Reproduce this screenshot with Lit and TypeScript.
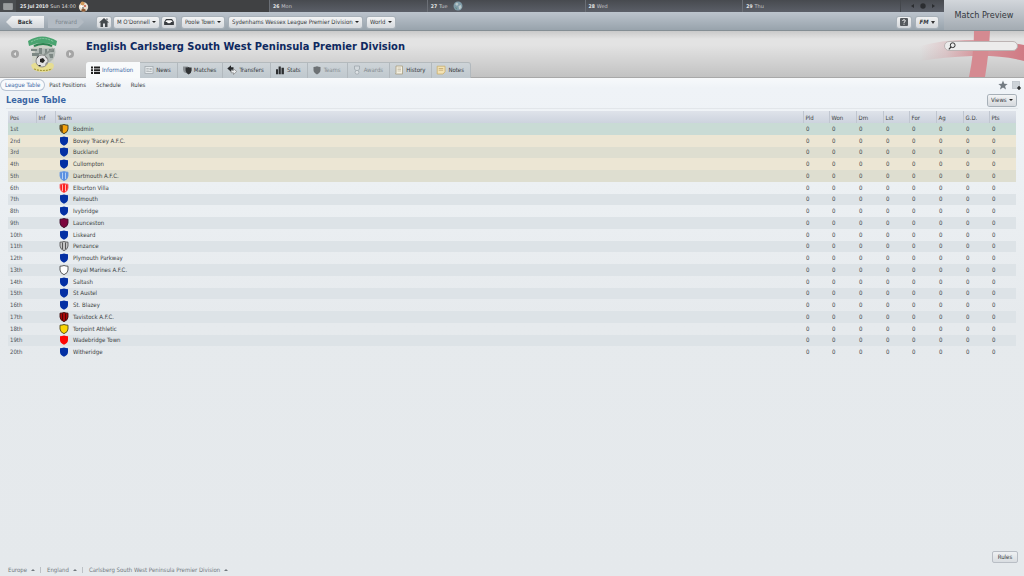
import { LitElement, html, css, svg, nothing } from "lit";
import { customElement, property } from "lit/decorators.js";

type Kit = { fill: string; edge?: string; stripe?: string; half?: string };

const BLUE: Kit = { fill: "#0430a4" };

const TEAMS: { name: string; kit: Kit }[] = [
  { name: "Bodmin", kit: { fill: "#f5a20c", edge: "#3a3422", half: "#6b4a10" } },
  { name: "Bovey Tracey A.F.C.", kit: BLUE },
  { name: "Buckland", kit: BLUE },
  { name: "Cullompton", kit: BLUE },
  { name: "Dartmouth A.F.C.", kit: { fill: "#5a90e2", edge: "#6c9ae0", stripe: "#b4cff4" } },
  { name: "Elburton Villa", kit: { fill: "#fb2020", edge: "#fb6a6a", stripe: "#ffb4b4" } },
  { name: "Falmouth", kit: BLUE },
  { name: "Ivybridge", kit: BLUE },
  { name: "Launceston", kit: { fill: "#7c063e", edge: "#3c1028" } },
  { name: "Liskeard", kit: BLUE },
  { name: "Penzance", kit: { fill: "#c4c4c4", edge: "#5c5c5c", stripe: "#555" } },
  { name: "Plymouth Parkway", kit: BLUE },
  { name: "Royal Marines A.F.C.", kit: { fill: "#fdfdfd", edge: "#4a4a4a" } },
  { name: "Saltash", kit: BLUE },
  { name: "St Austel", kit: BLUE },
  { name: "St. Blazey", kit: BLUE },
  { name: "Tavistock A.F.C.", kit: { fill: "#a80808", edge: "#3a0c0c", stripe: "#500606" } },
  { name: "Torpoint Athletic", kit: { fill: "#fbd503", edge: "#50481c" } },
  { name: "Wadebridge Town", kit: { fill: "#fe0606" } },
  { name: "Witheridge", kit: BLUE },
];

const STATS = ["Pld", "Won", "Drn", "Lst", "For", "Ag", "G.D.", "Pts"];

const ordinal = (n: number) =>
  n + (n > 3 ? "th" : n === 3 ? "rd" : n === 2 ? "nd" : "st");

const SHIELD = "M1 1.2 Q3 1.2 5 .5 Q7 1.2 9 1.2 V5 Q9 8 5 9.7 Q1 8 1 5Z";

const ICONS: Record<string, unknown> = {
  Information: svg`<path fill="#222" d="M1 1.5h2v2H1zM4 1.5h6v2H4zM1 4.2h2v2H1zM4 4.2h6v2H4zM1 7h2v2H1zM4 7h6v2H4z"/>`,
  News: svg`<rect x="1" y="1.5" width="8" height="7" fill="#e6eaec" stroke="#a4abb0" stroke-width=".8"/><path stroke="#a0a6aa" stroke-width=".7" d="M2.3 3.5h2.5M2.3 5h2.5M2.3 6.5h5.4"/><rect x="5.5" y="3" width="2.2" height="2.2" fill="#b4babe"/>`,
  Matches: svg`<path fill="#8b9094" d="M1 1.5h5v3Q6 7 3.5 8Q1 7 1 4.500Z"/><path fill="#303234" d="M3.600 2.500Q5.500 2.600 6.600 2Q7.700 2.600 9.600 2.500V5.500Q9.500 8 6.600 9.500Q3.700 8 3.600 5.500Z"/>`,
  Transfers: svg`<path fill="#26282a" d="M.3 3.500 4 .3V2.200H6.500V4.800H4V6.700Z"/><path fill="#eceeef" stroke="#777" stroke-width=".6" d="M9.700 6.500 6.500 9.500V7.800H4.200V5.500H6.500V3.700Z"/>`,
  Stats: svg`<path fill="#2c2e30" d="M1 4.200h2v5H1zM3.600 1.500h2.200v7.700H3.600zM6.500 2.800h2.400v6.400H6.500z"/>`,
  Teams: svg`<path fill="#6d7174" d="M1.500 2Q3.500 2 5 1.200Q6.500 2 8.500 2V5.200Q8.400 7.800 5 9.400Q1.600 7.800 1.500 5.200Z"/>`,
  Awards: svg`<path fill="#d2d8dc" stroke="#9aa2a8" stroke-width=".7" d="M2.500 1h5v3.300L5 6 2.500 4.300Z"/><circle cx="5" cy="7.300" r="1.900" fill="#dfe3e6" stroke="#9aa2a8" stroke-width=".7"/>`,
  History: svg`<path fill="#f5f1e2" stroke="#a79d80" stroke-width=".8" d="M2 1H8.500V9H1.500Q2.300 7.800 2 6Z"/><path stroke="#b2aa92" stroke-width=".6" d="M3.500 3h3.500M3.500 4.500h3.500M3.500 6h3.500"/>`,
  Notes: svg`<path fill="#f3e2b4" stroke="#c9ae6d" stroke-width=".8" d="M1.200 1.200H9V6.800L7 9H1.200Z"/><path stroke="#b99f66" stroke-width=".7" d="M2.700 3.500h4.500M2.700 5.200h4.500"/>`,
};

const base = css`
  * { box-sizing: border-box; }
  button, select, input {
    font: inherit; color: inherit; margin: 0; padding: 0; border: 0;
    background: none; appearance: none; outline: 0;
  }
  a { color: inherit; text-decoration: none; }
  svg { display: block; flex: none; }
`;

@customElement("drop-menu")
class DropMenu extends LitElement {
  @property() text = "";
  static styles = [base, css`
    :host { display: block; }
    .drop {
      display: flex; align-items: center; gap: 2px; height: 11px; padding: 0 3px;
      border-radius: 2px; background: linear-gradient(#f3f4f5, #d5d9dd);
      box-shadow: 0 0 0 1px #a7b0b8; color: #33373b;
    }
    .drop::after {
      content: ""; border: 2px solid transparent; border-top: 2px solid #222; border-bottom: 0;
    }
  `];
  render() {
    return html`<label class="drop"><select aria-label=${this.text}><option>${this.text}</option></select></label>`;
  }
}

@customElement("league-table")
class LeagueTable extends LitElement {
  static styles = [base, css`
    :host { display: block; }
    table { width: 100%; height: 247px; table-layout: fixed; border-collapse: collapse; color: #3b3f42; }
    .c-pos { width: 28px; } .c-inf { width: 19px; } .c-stat { width: 27px; } .c-short { width: 26px; }
    th, td { padding: 0 0 0 2px; text-align: left; font-weight: 400; line-height: 8px; white-space: nowrap; }
    thead tr { height: 12px; background: linear-gradient(#dfe3ea, #cdd3de); }
    thead th { padding-top: 2px; }
    thead th + th { border-left: 1px solid #c0c6d0; }
    tbody td { padding-left: 3px; }
    tbody tr:nth-child(odd) { background: #dde3e7; }
    tbody tr.champion { background: #c9dbd5; }
    tbody tr.playoff { background: #ece6d4; }
    tbody tr.playoff:nth-child(odd) { background: #deded0; }
    .team { display: flex; align-items: center; gap: 4px; }
    td.team-cell { padding-left: 4px; }
    td.pos { padding-left: 2px; color: #4c5358; }
    svg { width: 10px; height: 10px; }
  `];
  crest(k: Kit) {
    return html`<svg viewBox="0 0 10 10" aria-hidden="true">
      <path d=${SHIELD} fill=${k.fill}></path>
      ${k.half ? svg`<path d="M1.500 1.500H3.800V8.500Q1.500 7.500 1.500 5Z" fill=${k.half}/>` : nothing}
      ${k.stripe ? svg`<path d="M3.500 1.500V8M6.500 1.500V8" stroke=${k.stripe} stroke-width="1"/>` : nothing}
      ${k.edge ? svg`<path d=${SHIELD} fill="none" stroke=${k.edge} stroke-width=".9"/>` : nothing}
    </svg>`;
  }
  render() {
    return html`<table>
      <colgroup>
        <col class="c-pos" /><col class="c-inf" /><col />
        ${STATS.map((_, i) => html`<col class=${i % 3 === 0 ? "c-short" : "c-stat"} />`)}
      </colgroup>
      <thead><tr>
        <th scope="col">Pos</th><th scope="col">Inf</th><th scope="col">Team</th>
        ${STATS.map((s) => html`<th scope="col">${s}</th>`)}
      </tr></thead>
      <tbody>
        ${TEAMS.map((t, i) => html`<tr class=${i === 0 ? "champion" : i < 5 ? "playoff" : ""}>
          <td class="pos">${ordinal(i + 1)}</td><td></td>
          <td class="team-cell"><a class="team" href="#">${this.crest(t.kit)}${t.name}</a></td>
          ${STATS.map(() => html`<td>0</td>`)}
        </tr>`)}
      </tbody>
    </table>`;
  }
}

@customElement("app-root")
class AppRoot extends LitElement {
  static styles = [base, css`
    :host {
      display: flex; flex-direction: column; min-height: 100vh; overflow: hidden;
      font: 6px/8px "DejaVu Sans Condensed", "DejaVu Sans", sans-serif; color: #34383b;
      background: #e5e9ec;
    }
    .top { display: grid; grid-template-columns: 1fr 80px; }
    .days { display: flex; height: 12px; color: #c5c8ca; background: linear-gradient(#474a4f, #5b5f68); font-family: "DejaVu Sans", sans-serif; font-size: 5px; }
    .days b { font-family: "DejaVu Sans Condensed", "DejaVu Sans", sans-serif; color: #e4e6e7; }
    .cal { width: 16px; display: grid; place-items: center; background: #4a4d50; }
    .day { flex: 1; display: flex; align-items: center; gap: 2px; padding-left: 3px; border-left: 1px solid #6b6f76; }
    .day.now { flex: 0 0 253px; border: 0; padding-left: 4px; background: #404143; color: #dcdcdc; }
    .globe { margin-left: 3px; }
    .pager { flex: 0 0 44px; display: flex; align-items: center; justify-content: center; gap: 6px; border-left: 1px solid #44474c; }
    .bar {
      display: flex; align-items: center; height: 19px; padding: 2px 6px 0;
      background: linear-gradient(#bcc4cd, #98a3ac); border-bottom: 1px solid #848e94;
    }
    .preview {
      grid-column: 2; grid-row: 1 / 3; font-size: 9px; color: #33383d;
      background: linear-gradient(#d2d6db, #a3abb2); border-bottom: 1px solid #848e94;
    }
    .back, .fwd { height: 12px; width: 38px; font-weight: 700; }
    .back { background: linear-gradient(#f4f5f6, #d2d6da); clip-path: polygon(0 50%, 6px 0, 100% 0, 100% 100%, 6px 100%); }
    .fwd { width: 36px; margin-left: 4px; font-weight: 400; color: #7b848c; background: #b3bbc3; clip-path: polygon(0 0, 30px 0, 100% 50%, 30px 100%, 0 100%); }
    .sq {
      width: 14px; height: 11px; display: grid; place-items: center; border-radius: 2px;
      background: linear-gradient(#f0f1f2, #d2d6da); box-shadow: 0 0 0 1px #a7b0b8;
    }
    .nav { display: flex; align-items: center; gap: 3px; margin-left: 13px; }
    .nav.second { gap: 5px; margin-left: 6px; }
    .nav.end { gap: 5px; margin-left: auto; }
    .fm { width: 22px; display: flex; justify-content: center; align-items: center; gap: 2px; font-weight: 700; font-style: italic; }
    .head {
      position: relative; display: grid; grid-template-columns: 86px 1fr; height: 47px;
      background: linear-gradient(#c9c9c9, #e3e3e3 8px, #e3e3e3 14px, #c2c2c2); border-bottom: 1px solid #a8a8a8;
    }
    .flag { position: absolute; top: 0; right: 0; width: 104px; height: 46px; }
    .club { display: flex; align-items: center; justify-content: space-between; padding: 0 12px 0 11px; }
    .dot { width: 8px; height: 8px; border-radius: 50%; background: #a5a5a5; display: grid; place-items: center; }
    .main { display: flex; flex-direction: column; justify-content: space-between; }
    h1 { margin: 0; padding-top: 9px; font-size: 11px; line-height: 14px; color: #0e2960; }
    .tabs { display: flex; height: 16px; margin-bottom: -1px; }
    .tab {
      display: flex; align-items: center; gap: 2px; padding: 0 6px 2px 4px; border-top: 1px solid #b4babd;
      border-right: 1px solid #b2b9be; background: linear-gradient(#ced4d8, #bfc8ce);
    }
    .tab svg { width: 10px; height: 10px; }
    .tab.on { background: #f8fafb; color: #3a66a4; border-color: #f8fafb; border-radius: 3px 0 0 0; z-index: 1; }
    .tab.off { color: #858c91; }
    .tab:last-child { border-radius: 0 3px 0 0; }
    .search {
      position: absolute; right: 6px; top: 10px; width: 74px; height: 10px; display: flex; align-items: center;
      gap: 2px; padding-left: 3px; border-radius: 5px; background: #ececec; border: 1px solid #bcb4b4;
    }
    .search input { flex: 1; min-width: 0; height: 8px; }
    main {
      flex: 1; display: flex; flex-direction: column;
      background: linear-gradient(#f7f9fb, #eff3f7 10px, #eef2f5 60px, #e6eaed 240px, #e5e9ec);
    }
    .sub { display: flex; align-items: center; height: 14px; padding-right: 3px; }
    .sub a { height: 10px; line-height: 10px; padding: 0 5px; }
    .sub .on { padding: 0 4px; border-radius: 5px; box-shadow: 0 0 0 1px #b9c4d2; color: #3a66a4; background: #f8fafc; }
    .sub nav { display: flex; padding-left: 1px; }
    .tools { display: flex; gap: 4px; margin-left: auto; }
    .caption { display: flex; align-items: center; justify-content: space-between; height: 17px; margin: 0 6px 2px; padding-right: 2px; border-bottom: 1px solid #e2e6ea; }
    h2 { margin: 0; font-size: 9px; line-height: 12px; color: #3a66a4; }
    league-table { margin: 0 8px; }
    .foot { margin-top: auto; display: flex; flex-direction: column; }
    .rules { align-self: flex-end; margin: 0 6px 1px; width: 26px; height: 12px; border-radius: 2px; border: 1px solid #b9bec5; background: linear-gradient(#eff1f3, #d9dde1); }
    .crumbs { display: flex; align-items: center; height: 12px; padding-left: 8px; color: #72797f; }
    .crumbs a { display: flex; align-items: center; gap: 4px; }
    .crumbs a::after { content: ""; border: 2px solid transparent; border-bottom: 2px solid #72797f; border-top: 0; }
    .crumbs a + a { margin-left: 5px; padding-left: 6px; border-left: 1px solid #bcc1c5; line-height: 6px; }
  `];

  render() {
    const tabs = Object.keys(ICONS);
    return html`
      <div class="top">
        <div class="days">
          <div class="cal"><svg width="10" height="7" viewBox="0 0 10 7"><rect width="10" height="7" rx="1" fill="#8f9394"/><path d="M1 2h8M1 4h8M1 6h8" stroke="#b0b3b3" stroke-width=".7"/></svg></div>
          <div class="day now"><b>25 Jul 2010</b> Sun 14:00
            <svg width="11" height="11" viewBox="0 0 11 11"><circle cx="5.500" cy="6" r="4.700" fill="#e9e1d2"/><circle cx="4.500" cy="2.500" r="2" fill="#d19a5c"/><path d="M3 9Q5.500 6.500 8 9L7 10.500H4Z" fill="#8d5a34"/><circle cx="7" cy="5" r="1" fill="#c8503c"/><circle cx="3.500" cy="5.500" r="1.200" fill="#fff"/><circle cx="5" cy="7" r=".8" fill="#4c4038"/></svg>
          </div>
          <div class="day"><b>26</b> Mon</div>
          <div class="day"><b>27</b> Tue
            <svg class="globe" width="10" height="10" viewBox="0 0 10 10"><circle cx="5" cy="5" r="4.500" fill="#7f9ba8"/><path d="M2 3 4 1.500 5.500 3 4 5ZM5.500 5 8 4 8.500 7 6 8.500Z" fill="#b9c8c9"/><path d="M2 6 4 7 3.500 8.500Z" fill="#5f8a80"/></svg>
          </div>
          <div class="day"><b>28</b> Wed</div>
          <div class="day"><b>29</b> Thu</div>
          <div class="pager"><svg width="26" height="6" viewBox="0 0 26 6" fill="#2b2d30"><path d="M4 1v4L1 3ZM22 1v4l3-2Z"/><circle cx="13" cy="3" r="2.700"/></svg></div>
        </div>
        <div class="bar">
          <button class="back">Back</button><button class="fwd">Forward</button>
          <div class="nav">
            <button class="sq" aria-label="Home"><svg width="10" height="9" viewBox="0 0 10 9"><path fill="#44494d" d="M5 0 10 4.500H8.500V9H6V5.500H4V9H1.500V4.500H0ZM7.300.500h1.200V2.500L7.300 1.500Z"/></svg></button>
            <drop-menu text="M O'Donnell"></drop-menu>
            <button class="sq" aria-label="Inbox"><svg width="10" height="6" viewBox="0 0 10 6"><path fill="#fafafa" stroke="#383c40" stroke-width="1.100" d="M.7 3 2.300.6H7.700L9.300 3V5.400H.7Z"/><path fill="#383c40" d="M.7 3H3L3.800 4.200H6.200L7 3H9.300V5.500H.7Z"/></svg></button>
          </div>
          <div class="nav second">
            <drop-menu text="Poole Town"></drop-menu>
            <drop-menu text="Sydenhams Wessex League Premier Division"></drop-menu>
            <drop-menu text="World"></drop-menu>
          </div>
          <div class="nav end">
            <button class="sq" aria-label="Help"><svg width="8" height="8" viewBox="0 0 8 8"><rect width="8" height="8" rx="1" fill="#55595d"/><path d="M2.700 3Q2.700 1.700 4 1.700T5.300 3Q5.300 3.700 4 4.400V5M4 5.700V6.700" fill="none" stroke="#eee" stroke-width="1"/></svg></button>
            <button class="sq fm">FM <svg width="4" height="3" viewBox="0 0 4 3"><path d="M0 0H4L2 3Z" fill="#333"/></svg></button>
          </div>
        </div>
        <button class="preview">Match Preview</button>
      </div>

      <header class="head">
        <svg class="flag" viewBox="0 0 104 46" preserveAspectRatio="none" aria-hidden="true">
          <defs><linearGradient id="f"><stop offset="0" stop-color="#d5828a" stop-opacity="0"/><stop offset=".25" stop-color="#d5828a" stop-opacity=".25"/><stop offset=".55" stop-color="#d5848c" stop-opacity=".8"/><stop offset="1" stop-color="#d07a84"/></linearGradient></defs>
          <path fill="url(#f)" d="M0 15Q25 8 52 9T104 14V30Q80 24 52 25T0 30Z"/>
          <path fill="#d58a91" d="M54 0H70Q69 22 65 46H49Q54 22 54 0Z"/>
        </svg>
        <div class="club">
          <button class="dot" aria-label="Previous"><svg width="4" height="4" viewBox="0 0 4 4"><path d="M3 0V4L.5 2Z" fill="#e6e6e6"/></svg></button>
          <svg width="32" height="38" viewBox="0 0 32 38" aria-hidden="true">
            <path d="M6 10Q16 6 26 10L27 30Q16 38 5 30Z" fill="#cfd2c8"/>
            <path d="M4 30Q5 37 16 37T27 30L25 28H7Z" fill="#e6dd92"/>
            <path d="M3 14Q8 12 8 19L12 27H23Q30 22 28 13Z" fill="#b0b8b4"/>
            <path d="M4 14h6v2H4zM12 13h3v6h-3zM18 14h2v5h-2zM22 14h5v3h-5zM5 18h7v3H5zM22 19h4v4h-3z" fill="#7d8884"/>
            <path d="M1 6Q15-3 30 6L29 11Q16 5 2 11Z" fill="#4aa470"/>
            <path d="M4 7Q16 0 27 7" fill="none" stroke="#8ccba4" stroke-width="1" stroke-dasharray="2 1"/>
            <path d="M7 11Q16 7 25 11" fill="none" stroke="#2c8350" stroke-width="2"/>
            <path d="M17 20 26 14" stroke="#8a938f" stroke-width="2"/>
            <circle cx="15" cy="26" r="6" fill="#e2e2e2" stroke="#777" stroke-width=".8"/>
            <path d="M13 24 16 23 18 25.500 16 28 13 27ZM9.500 24 12 21 10.500 21.500ZM18 21 20.500 24 19 23ZM11 30 14 30 13 31.500ZM19 28 20.500 27 18 30.500Z" fill="#262626"/>
            <path d="M7 34Q16 37 25 34" fill="none" stroke="#a89b3c" stroke-width="1.200" stroke-dasharray="2 1"/>
          </svg>
          <button class="dot" aria-label="Next"><svg width="4" height="4" viewBox="0 0 4 4"><path d="M1 0V4L3.500 2Z" fill="#e6e6e6"/></svg></button>
        </div>
        <div class="main">
          <h1>English Carlsberg South West Peninsula Premier Division</h1>
          <nav class="tabs">
            ${tabs.map((t, i) => html`<a href="#" class="tab ${i === 0 ? "on" : t === "Teams" || t === "Awards" ? "off" : ""}"><svg viewBox="0 0 10 10" fill="none" aria-hidden="true">${ICONS[t]}</svg>${t}</a>`)}
          </nav>
        </div>
        <label class="search"><svg width="8" height="8" viewBox="0 0 8 8"><circle cx="4.700" cy="3.200" r="2.400" fill="none" stroke="#333" stroke-width="1"/><path d="M3 5 .8 7.300" stroke="#333" stroke-width="1.200"/></svg><input type="search" aria-label="Search" /></label>
      </header>

      <main>
        <div class="sub">
          <nav><a class="on" href="#">League Table</a><a href="#">Past Positions</a><a href="#">Schedule</a><a href="#">Rules</a></nav>
          <div class="tools">
            <button aria-label="Bookmark"><svg width="10" height="10" viewBox="0 0 10 10"><path fill="#737b82" d="M5 .5 6.300 3.700 9.700 3.900 7.100 6.100 8 9.500 5 7.600 2 9.500 2.900 6.100.3 3.900 3.700 3.700Z"/></svg></button>
            <button aria-label="Add note"><svg width="9" height="9" viewBox="0 0 9 9"><rect x=".5" y=".5" width="7" height="7" fill="#cdd3d8" stroke="#bcc3c9" stroke-width=".8"/><path d="M7 5V9M5 7H9" stroke="#111" stroke-width="1.200"/></svg></button>
          </div>
        </div>
        <div class="caption"><h2>League Table</h2><drop-menu text="Views"></drop-menu></div>
        <league-table></league-table>
        <div class="foot">
          <button class="rules">Rules</button>
          <nav class="crumbs"><a href="#">Europe</a><a href="#">England</a><a href="#">Carlsberg South West Peninsula Premier Division</a></nav>
        </div>
      </main>`;
  }
}
